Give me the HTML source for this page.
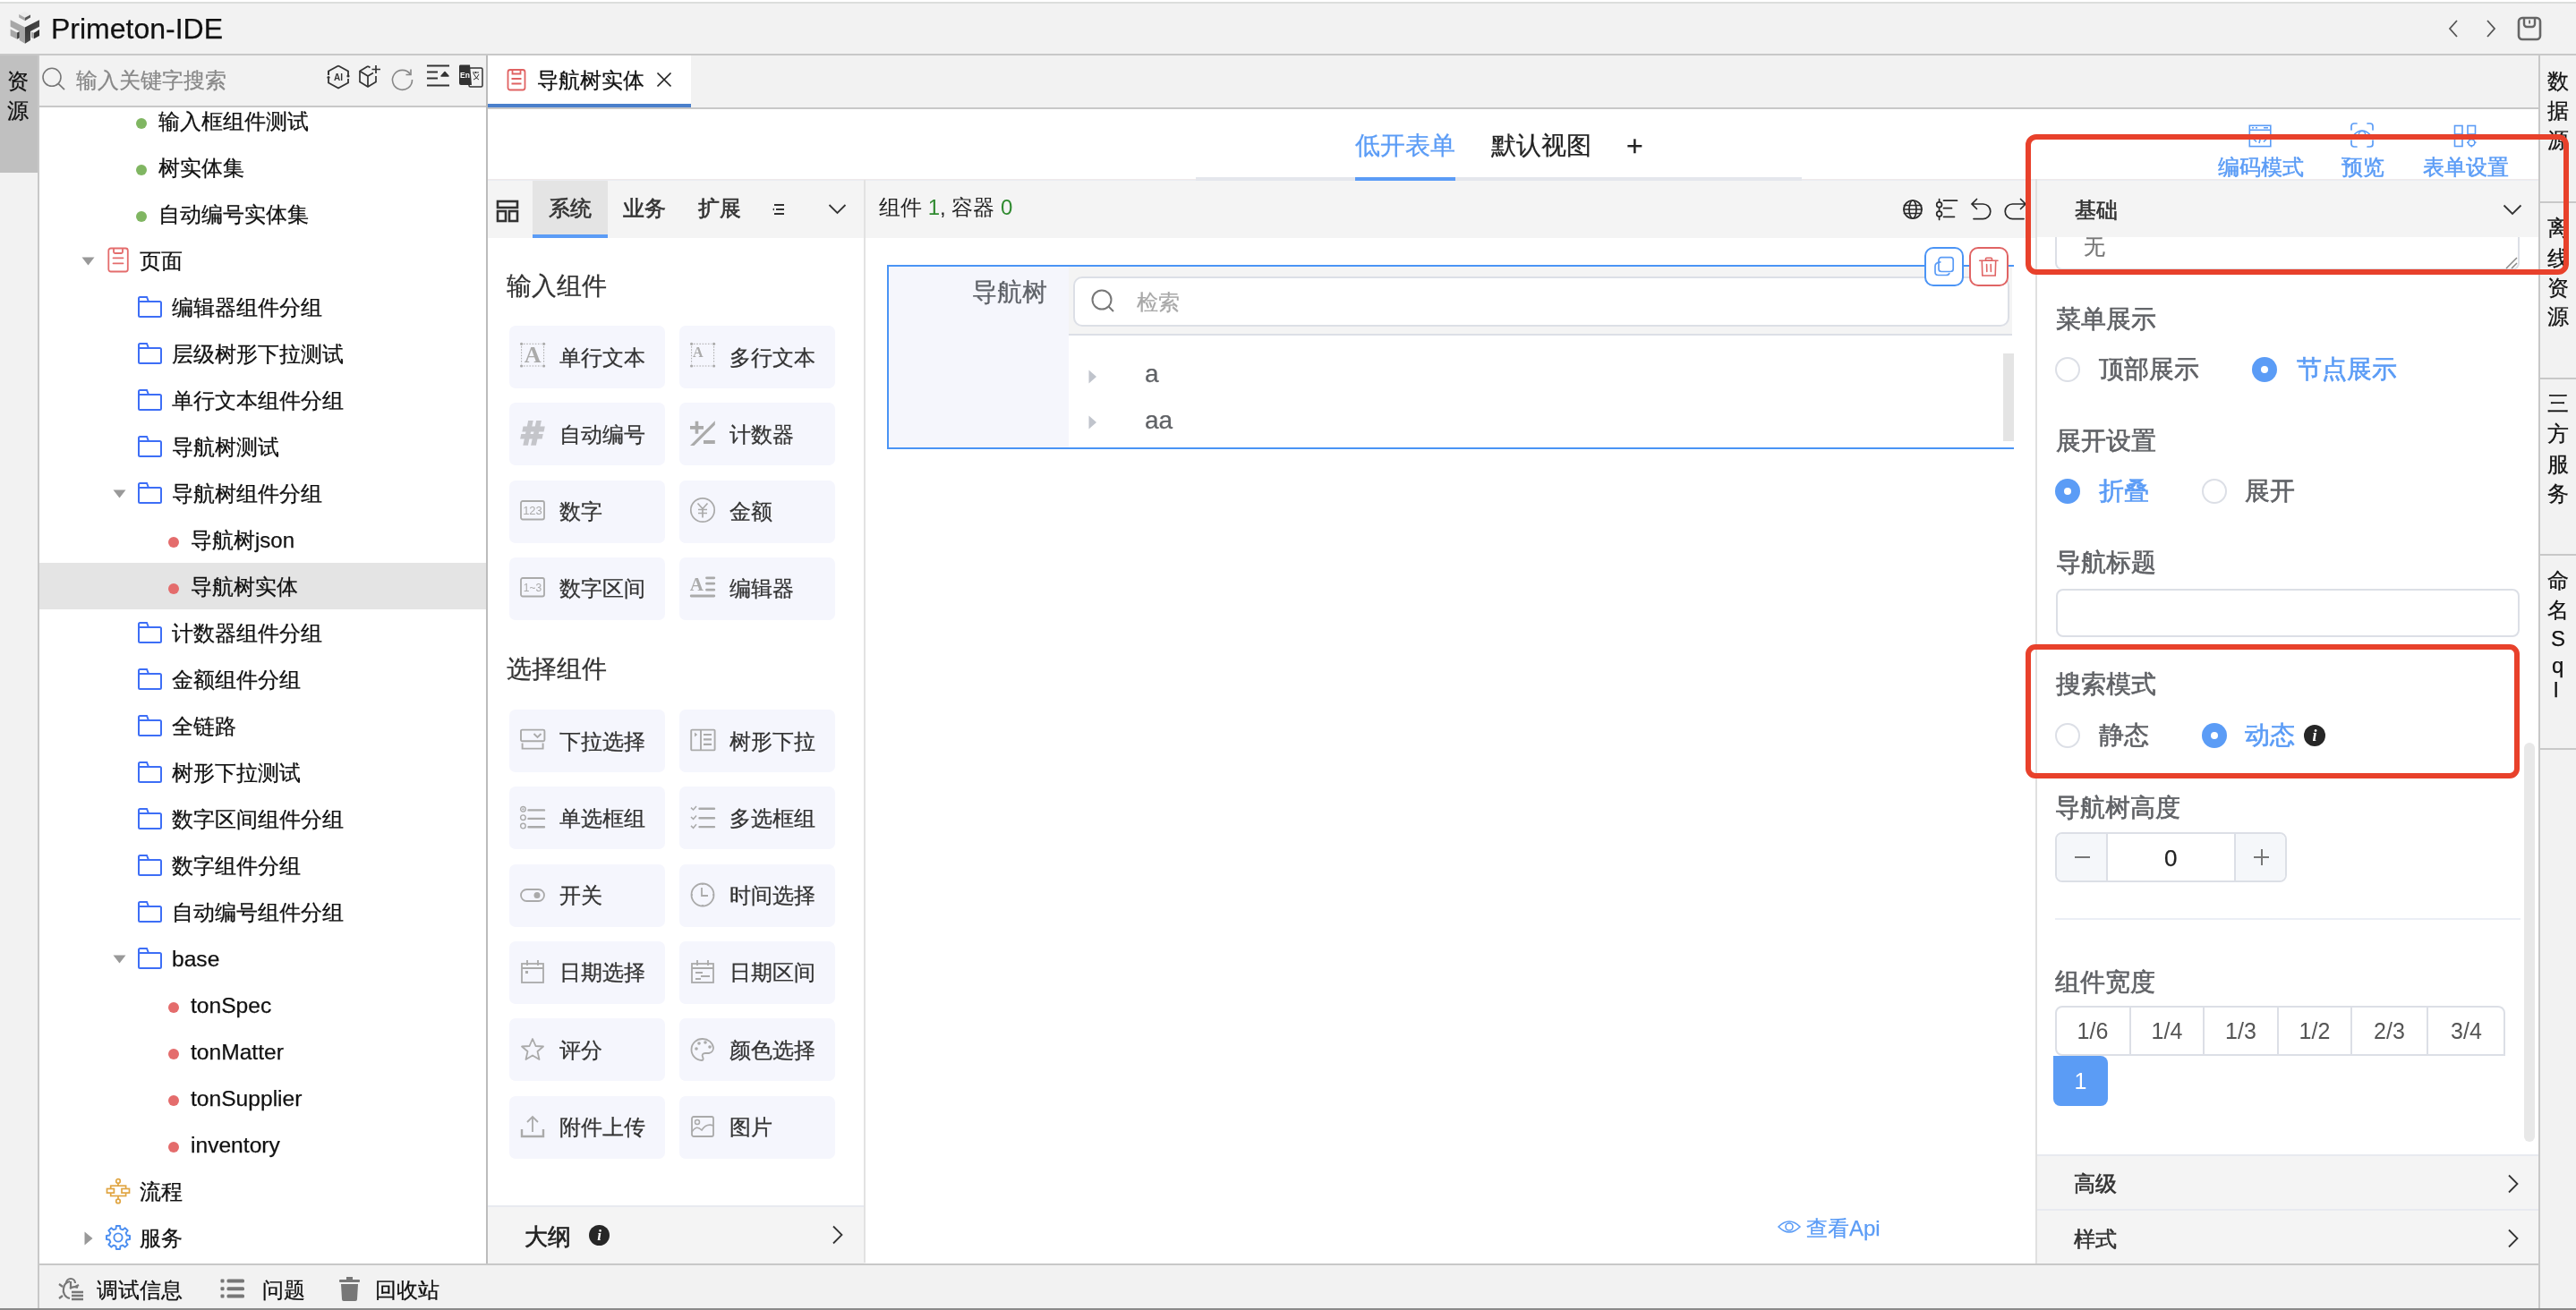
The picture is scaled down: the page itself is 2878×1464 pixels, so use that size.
<!DOCTYPE html>
<html><head><meta charset="utf-8"><style>
html,body{margin:0;padding:0;}
body{width:2878px;height:1464px;position:relative;overflow:hidden;background:#f2f2f2;font-family:'Liberation Sans',sans-serif;}
div{box-sizing:border-box;}
</style></head><body><div id="root" style="position:absolute;left:0;top:0;width:2878px;height:1464px;will-change:transform">
<div style="position:absolute;left:0px;top:0px;width:2878px;height:2px;background:#fff"></div><div style="position:absolute;left:0px;top:2px;width:2878px;height:2px;background:#dcdedc"></div><svg style="position:absolute;left:0px;top:0px;overflow:visible;" width="120" height="60" viewBox="0 0 2576 1288">
<defs><linearGradient id="gr" x1="0" y1="0" x2="1" y2="1"><stop offset="0" stop-color="#2e2e2e"/><stop offset="1" stop-color="#5a5a5a"/></linearGradient></defs>
<polygon points="455,345 590,275 730,355 600,425" fill="#ececec"/>
<polygon points="455,345 600,425 600,500 455,420" fill="#a9a9a9"/>
<polygon points="600,425 730,355 730,420 600,500" fill="#555"/>
<polygon points="250,480 600,655 600,1045 465,965 465,750 250,640" fill="#a7a7a7"/>
<polygon points="250,700 410,785 410,940 250,860" fill="#a7a7a7"/>
<polygon points="410,785 465,755 465,905 410,940" fill="#3a3a3a"/>
<polygon points="600,655 945,475 945,640 730,750 730,965 600,1045" fill="url(#gr)"/>
<polygon points="750,760 815,790 815,930 750,900" fill="#a7a7a7"/>
<polygon points="815,790 945,710 945,860 815,930" fill="#2f2f2f"/>
</svg><div style="position:absolute;left:57px;top:6.5px;height:51px;line-height:51px;font-size:32px;color:#111;font-weight:400;white-space:nowrap;-webkit-text-stroke:0.25px #111;">Primeton-IDE</div><div style="position:absolute;left:0px;top:60px;width:2878px;height:2px;background:#c8c8c8"></div><div style="position:absolute;left:0px;top:62px;width:42px;height:131px;background:#c0c0c0"></div><div style="position:absolute;left:42px;top:62px;width:2px;height:1400px;background:#c8c8c8"></div><div style="position:absolute;left:7.5px;top:72.0px;height:38px;line-height:38px;font-size:24px;color:#111;font-weight:400;white-space:nowrap;-webkit-text-stroke:0.25px #111;">资</div><div style="position:absolute;left:7.5px;top:105.0px;height:38px;line-height:38px;font-size:24px;color:#111;font-weight:400;white-space:nowrap;-webkit-text-stroke:0.25px #111;">源</div><div style="position:absolute;left:2836px;top:62px;width:2px;height:1400px;background:#c8c8c8"></div><div style="position:absolute;left:44px;top:1412px;width:2792px;height:2px;background:#c8c8c8"></div><div style="position:absolute;left:0px;top:1462px;width:2878px;height:2px;background:#8a8a8a"></div><div style="position:absolute;left:44px;top:62px;width:499px;height:56px;background:#f2f2f2"></div><div style="position:absolute;left:44px;top:118px;width:499px;height:2px;background:#c8c8c8"></div><div style="position:absolute;left:44px;top:120px;width:499px;height:1292px;background:#fff"></div><div style="position:absolute;left:543px;top:62px;width:2px;height:1350px;background:#bcbcbc"></div><div style="position:absolute;left:85px;top:71.0px;height:38px;line-height:38px;font-size:24px;color:#888;font-weight:400;white-space:nowrap;-webkit-text-stroke:0.25px #888;">输入关键字搜索</div><div style="position:absolute;left:545px;top:62px;width:2291px;height:58px;background:#f2f2f2"></div><div style="position:absolute;left:545px;top:62px;width:227px;height:54px;background:#fff"></div><div style="position:absolute;left:545px;top:116px;width:227px;height:4px;background:#4a7fcb"></div><div style="position:absolute;left:545px;top:120px;width:2291px;height:2px;background:#c8c8c8"></div><div style="position:absolute;left:600px;top:71.0px;height:38px;line-height:38px;font-size:24px;color:#111;font-weight:400;white-space:nowrap;-webkit-text-stroke:0.25px #111;">导航树实体</div><div style="position:absolute;left:545px;top:122px;width:2291px;height:79px;background:#fff"></div><svg style="position:absolute;left:2734px;top:22px;overflow:visible;" width="14" height="20" viewBox="0 0 14 20"><path d="M11 1 L3 10 L11 19" fill="none" stroke="#555" stroke-width="1.8"/></svg><svg style="position:absolute;left:2776px;top:22px;overflow:visible;" width="14" height="20" viewBox="0 0 14 20"><path d="M3 1 L11 10 L3 19" fill="none" stroke="#555" stroke-width="1.8"/></svg><svg style="position:absolute;left:2812px;top:18px;overflow:visible;" width="28" height="28" viewBox="0 0 28 28"><rect x="2" y="2" width="24" height="24" rx="4" fill="none" stroke="#666" stroke-width="2.6"/><path d="M8 2 V9 a3 3 0 0 0 3 3 H17 a3 3 0 0 0 3 -3 V2" fill="none" stroke="#666" stroke-width="2.4"/><rect x="13.2" y="4.5" width="1.8" height="4" fill="#666"/></svg><div style="position:absolute;left:2846px;top:72.0px;height:38px;line-height:38px;font-size:24px;color:#111;font-weight:400;white-space:nowrap;-webkit-text-stroke:0.25px #111;">数</div><div style="position:absolute;left:2846px;top:105.0px;height:38px;line-height:38px;font-size:24px;color:#111;font-weight:400;white-space:nowrap;-webkit-text-stroke:0.25px #111;">据</div><div style="position:absolute;left:2846px;top:138.0px;height:38px;line-height:38px;font-size:24px;color:#111;font-weight:400;white-space:nowrap;-webkit-text-stroke:0.25px #111;">源</div><div style="position:absolute;left:2846px;top:236.0px;height:38px;line-height:38px;font-size:24px;color:#111;font-weight:400;white-space:nowrap;-webkit-text-stroke:0.25px #111;">离</div><div style="position:absolute;left:2846px;top:269.5px;height:38px;line-height:38px;font-size:24px;color:#111;font-weight:400;white-space:nowrap;-webkit-text-stroke:0.25px #111;">线</div><div style="position:absolute;left:2846px;top:303.0px;height:38px;line-height:38px;font-size:24px;color:#111;font-weight:400;white-space:nowrap;-webkit-text-stroke:0.25px #111;">资</div><div style="position:absolute;left:2846px;top:335.0px;height:38px;line-height:38px;font-size:24px;color:#111;font-weight:400;white-space:nowrap;-webkit-text-stroke:0.25px #111;">源</div><div style="position:absolute;left:2846px;top:432.0px;height:38px;line-height:38px;font-size:24px;color:#111;font-weight:400;white-space:nowrap;-webkit-text-stroke:0.25px #111;">三</div><div style="position:absolute;left:2846px;top:465.5px;height:38px;line-height:38px;font-size:24px;color:#111;font-weight:400;white-space:nowrap;-webkit-text-stroke:0.25px #111;">方</div><div style="position:absolute;left:2846px;top:500.0px;height:38px;line-height:38px;font-size:24px;color:#111;font-weight:400;white-space:nowrap;-webkit-text-stroke:0.25px #111;">服</div><div style="position:absolute;left:2846px;top:532.5px;height:38px;line-height:38px;font-size:24px;color:#111;font-weight:400;white-space:nowrap;-webkit-text-stroke:0.25px #111;">务</div><div style="position:absolute;left:2846px;top:630.0px;height:38px;line-height:38px;font-size:24px;color:#111;font-weight:400;white-space:nowrap;-webkit-text-stroke:0.25px #111;">命</div><div style="position:absolute;left:2846px;top:663.0px;height:38px;line-height:38px;font-size:24px;color:#111;font-weight:400;white-space:nowrap;-webkit-text-stroke:0.25px #111;">名</div><div style="position:absolute;left:2838px;top:225px;width:40px;height:2px;background:#c8c8c8"></div><div style="position:absolute;left:2838px;top:422px;width:40px;height:2px;background:#c8c8c8"></div><div style="position:absolute;left:2838px;top:619px;width:40px;height:2px;background:#c8c8c8"></div><div style="position:absolute;left:2838px;top:836px;width:40px;height:2px;background:#c8c8c8"></div><div style="position:absolute;left:2850px;top:695.0px;height:38px;line-height:38px;font-size:24px;color:#111;font-weight:400;white-space:nowrap;-webkit-text-stroke:0.25px #111;">S</div><div style="position:absolute;left:2851px;top:725.0px;height:38px;line-height:38px;font-size:24px;color:#111;font-weight:400;white-space:nowrap;-webkit-text-stroke:0.25px #111;">q</div><div style="position:absolute;left:2853px;top:752.0px;height:38px;line-height:38px;font-size:24px;color:#111;font-weight:400;white-space:nowrap;-webkit-text-stroke:0.25px #111;">l</div><svg style="position:absolute;left:46px;top:74px;overflow:visible;" width="28" height="28" viewBox="0 0 28 28"><circle cx="12" cy="12.3" r="10" fill="none" stroke="#777" stroke-width="1.6"/><path d="M19.3 19.6 L26 26.2" stroke="#777" stroke-width="1.7"/></svg><svg style="position:absolute;left:364px;top:72px;overflow:visible;" width="28" height="28" viewBox="0 0 28 28"><path d="M14 1.5 L25 7.5 V12 M25 16 V20.5 L14 26.5 L3 20.5 V16 M3 12 V7.5 Z" fill="none" stroke="#333" stroke-width="1.8"/><path d="M14 1.5 L3 7.5 V11" fill="none" stroke="#333" stroke-width="1.8"/><circle cx="25" cy="13" r="1.6" fill="#333"/><circle cx="3" cy="14.5" r="1.6" fill="#333"/><text x="14" y="18" font-size="10" font-family="Liberation Sans" font-weight="bold" text-anchor="middle" fill="#333">AI</text></svg><svg style="position:absolute;left:400px;top:72px;overflow:visible;" width="28" height="28" viewBox="0 0 28 28"><path d="M11 2 L2 7.5 V19.5 L11 25 L20 19.5 V13" fill="none" stroke="#333" stroke-width="1.7"/><path d="M2 7.5 L11 13 L17 9.5 M11 13 V25" fill="none" stroke="#333" stroke-width="1.7"/><path d="M11 2 L13.5 3.5" stroke="#333" stroke-width="1.7"/><path d="M20 1 V10 M15.5 5.5 H25" stroke="#333" stroke-width="1.7"/></svg><svg style="position:absolute;left:437px;top:75px;overflow:visible;" width="26" height="27" viewBox="0 0 26 27"><path d="M21.5 8 A11 11 0 1 0 23.5 14" fill="none" stroke="#888" stroke-width="1.6"/><path d="M22 2.5 V8.5 H16.5" fill="none" stroke="#888" stroke-width="1.6"/></svg><svg style="position:absolute;left:476px;top:72px;overflow:visible;" width="28" height="27" viewBox="0 0 28 27"><path d="M1 1.5 H26 M1 8.5 H13 M1 15.5 H13 M1 23.5 H26" stroke="#333" stroke-width="1.8"/><path d="M17 13 L21 8.5 L25 13 Z" fill="#333" stroke="#333" stroke-width="1.5" stroke-linejoin="round"/></svg><svg style="position:absolute;left:512px;top:72px;overflow:visible;" width="28" height="28" viewBox="0 0 28 28"><rect x="12" y="4" width="15" height="21" rx="1.5" fill="none" stroke="#333" stroke-width="1.5"/><path d="M2 0.5 H13 L15 23 H3 A2 2 0 0 1 1 21 V2.5 A2 2 0 0 1 2 0.5 Z" fill="#333"/><text x="7.5" y="14.5" font-size="8.5" font-family="Liberation Sans" font-weight="bold" fill="#fff" text-anchor="middle">En</text><path d="M16 9 H23 M19.5 8 V10 M17 10 Q20 16 23 17 M23 11 Q21 16 17 17" fill="none" stroke="#333" stroke-width="1"/></svg><div style="position:absolute;left:152px;top:132px;width:12px;height:12px;border-radius:50%;background:#80b662"></div><div style="position:absolute;left:177px;top:116.5px;height:38px;line-height:38px;font-size:24px;color:#111;font-weight:400;white-space:nowrap;-webkit-text-stroke:0.25px #111;">输入框组件测试</div><div style="position:absolute;left:152px;top:184px;width:12px;height:12px;border-radius:50%;background:#80b662"></div><div style="position:absolute;left:177px;top:168.5px;height:38px;line-height:38px;font-size:24px;color:#111;font-weight:400;white-space:nowrap;-webkit-text-stroke:0.25px #111;">树实体集</div><div style="position:absolute;left:152px;top:236px;width:12px;height:12px;border-radius:50%;background:#80b662"></div><div style="position:absolute;left:177px;top:220.5px;height:38px;line-height:38px;font-size:24px;color:#111;font-weight:400;white-space:nowrap;-webkit-text-stroke:0.25px #111;">自动编号实体集</div><svg style="position:absolute;left:91px;top:287px;overflow:visible;" width="15" height="10" viewBox="0 0 15 10"><path d="M0.5 0.5 H14.5 L7.5 9.5 Z" fill="#999"/></svg><svg style="position:absolute;left:119px;top:275px;overflow:visible;" width="26" height="30" viewBox="0 0 26 30"><rect x="2.3" y="2.5" width="21.5" height="26" rx="2.5" fill="none" stroke="#e46c6c" stroke-width="1.8"/><path d="M8 2.5 V6.5 Q8 8 9.5 8 H16.5 Q18 8 18 6.5 V2.5" fill="none" stroke="#e46c6c" stroke-width="1.8"/><path d="M7.5 13.3 H18.5 M7.5 19.3 H18.5" stroke="#e46c6c" stroke-width="1.8" stroke-linecap="round"/></svg><div style="position:absolute;left:155.5px;top:272.5px;height:38px;line-height:38px;font-size:24px;color:#111;font-weight:400;white-space:nowrap;-webkit-text-stroke:0.25px #111;">页面</div><svg style="position:absolute;left:153px;top:330px;overflow:visible;" width="29" height="25" viewBox="0 0 29 25"><path d="M2 4 V22.5 A1.5 1.5 0 0 0 3.5 24 H25.5 A1.5 1.5 0 0 0 27 22.5 V8.5 A1.5 1.5 0 0 0 25.5 7 H13 L11 2 H3.5 A1.5 1.5 0 0 0 2 3.5 Z M2 7 H13" fill="none" stroke="#3d6ef6" stroke-width="2"/></svg><div style="position:absolute;left:192px;top:324.5px;height:38px;line-height:38px;font-size:24px;color:#111;font-weight:400;white-space:nowrap;-webkit-text-stroke:0.25px #111;">编辑器组件分组</div><svg style="position:absolute;left:153px;top:382px;overflow:visible;" width="29" height="25" viewBox="0 0 29 25"><path d="M2 4 V22.5 A1.5 1.5 0 0 0 3.5 24 H25.5 A1.5 1.5 0 0 0 27 22.5 V8.5 A1.5 1.5 0 0 0 25.5 7 H13 L11 2 H3.5 A1.5 1.5 0 0 0 2 3.5 Z M2 7 H13" fill="none" stroke="#3d6ef6" stroke-width="2"/></svg><div style="position:absolute;left:192px;top:376.5px;height:38px;line-height:38px;font-size:24px;color:#111;font-weight:400;white-space:nowrap;-webkit-text-stroke:0.25px #111;">层级树形下拉测试</div><svg style="position:absolute;left:153px;top:434px;overflow:visible;" width="29" height="25" viewBox="0 0 29 25"><path d="M2 4 V22.5 A1.5 1.5 0 0 0 3.5 24 H25.5 A1.5 1.5 0 0 0 27 22.5 V8.5 A1.5 1.5 0 0 0 25.5 7 H13 L11 2 H3.5 A1.5 1.5 0 0 0 2 3.5 Z M2 7 H13" fill="none" stroke="#3d6ef6" stroke-width="2"/></svg><div style="position:absolute;left:192px;top:428.5px;height:38px;line-height:38px;font-size:24px;color:#111;font-weight:400;white-space:nowrap;-webkit-text-stroke:0.25px #111;">单行文本组件分组</div><svg style="position:absolute;left:153px;top:486px;overflow:visible;" width="29" height="25" viewBox="0 0 29 25"><path d="M2 4 V22.5 A1.5 1.5 0 0 0 3.5 24 H25.5 A1.5 1.5 0 0 0 27 22.5 V8.5 A1.5 1.5 0 0 0 25.5 7 H13 L11 2 H3.5 A1.5 1.5 0 0 0 2 3.5 Z M2 7 H13" fill="none" stroke="#3d6ef6" stroke-width="2"/></svg><div style="position:absolute;left:192px;top:480.5px;height:38px;line-height:38px;font-size:24px;color:#111;font-weight:400;white-space:nowrap;-webkit-text-stroke:0.25px #111;">导航树测试</div><svg style="position:absolute;left:126px;top:547px;overflow:visible;" width="15" height="10" viewBox="0 0 15 10"><path d="M0.5 0.5 H14.5 L7.5 9.5 Z" fill="#999"/></svg><svg style="position:absolute;left:153px;top:538px;overflow:visible;" width="29" height="25" viewBox="0 0 29 25"><path d="M2 4 V22.5 A1.5 1.5 0 0 0 3.5 24 H25.5 A1.5 1.5 0 0 0 27 22.5 V8.5 A1.5 1.5 0 0 0 25.5 7 H13 L11 2 H3.5 A1.5 1.5 0 0 0 2 3.5 Z M2 7 H13" fill="none" stroke="#3d6ef6" stroke-width="2"/></svg><div style="position:absolute;left:192px;top:532.5px;height:38px;line-height:38px;font-size:24px;color:#111;font-weight:400;white-space:nowrap;-webkit-text-stroke:0.25px #111;">导航树组件分组</div><div style="position:absolute;left:188px;top:600px;width:12px;height:12px;border-radius:50%;background:#e46c6c"></div><div style="position:absolute;left:213px;top:584.5px;height:38px;line-height:38px;font-size:24px;color:#111;font-weight:400;white-space:nowrap;-webkit-text-stroke:0.25px #111;">导航树json</div><div style="position:absolute;left:44px;top:629px;width:499px;height:52px;background:#e4e4e4"></div><div style="position:absolute;left:188px;top:652px;width:12px;height:12px;border-radius:50%;background:#e46c6c"></div><div style="position:absolute;left:213px;top:636.5px;height:38px;line-height:38px;font-size:24px;color:#111;font-weight:400;white-space:nowrap;-webkit-text-stroke:0.25px #111;">导航树实体</div><svg style="position:absolute;left:153px;top:694px;overflow:visible;" width="29" height="25" viewBox="0 0 29 25"><path d="M2 4 V22.5 A1.5 1.5 0 0 0 3.5 24 H25.5 A1.5 1.5 0 0 0 27 22.5 V8.5 A1.5 1.5 0 0 0 25.5 7 H13 L11 2 H3.5 A1.5 1.5 0 0 0 2 3.5 Z M2 7 H13" fill="none" stroke="#3d6ef6" stroke-width="2"/></svg><div style="position:absolute;left:192px;top:688.5px;height:38px;line-height:38px;font-size:24px;color:#111;font-weight:400;white-space:nowrap;-webkit-text-stroke:0.25px #111;">计数器组件分组</div><svg style="position:absolute;left:153px;top:746px;overflow:visible;" width="29" height="25" viewBox="0 0 29 25"><path d="M2 4 V22.5 A1.5 1.5 0 0 0 3.5 24 H25.5 A1.5 1.5 0 0 0 27 22.5 V8.5 A1.5 1.5 0 0 0 25.5 7 H13 L11 2 H3.5 A1.5 1.5 0 0 0 2 3.5 Z M2 7 H13" fill="none" stroke="#3d6ef6" stroke-width="2"/></svg><div style="position:absolute;left:192px;top:740.5px;height:38px;line-height:38px;font-size:24px;color:#111;font-weight:400;white-space:nowrap;-webkit-text-stroke:0.25px #111;">金额组件分组</div><svg style="position:absolute;left:153px;top:798px;overflow:visible;" width="29" height="25" viewBox="0 0 29 25"><path d="M2 4 V22.5 A1.5 1.5 0 0 0 3.5 24 H25.5 A1.5 1.5 0 0 0 27 22.5 V8.5 A1.5 1.5 0 0 0 25.5 7 H13 L11 2 H3.5 A1.5 1.5 0 0 0 2 3.5 Z M2 7 H13" fill="none" stroke="#3d6ef6" stroke-width="2"/></svg><div style="position:absolute;left:192px;top:792.5px;height:38px;line-height:38px;font-size:24px;color:#111;font-weight:400;white-space:nowrap;-webkit-text-stroke:0.25px #111;">全链路</div><svg style="position:absolute;left:153px;top:850px;overflow:visible;" width="29" height="25" viewBox="0 0 29 25"><path d="M2 4 V22.5 A1.5 1.5 0 0 0 3.5 24 H25.5 A1.5 1.5 0 0 0 27 22.5 V8.5 A1.5 1.5 0 0 0 25.5 7 H13 L11 2 H3.5 A1.5 1.5 0 0 0 2 3.5 Z M2 7 H13" fill="none" stroke="#3d6ef6" stroke-width="2"/></svg><div style="position:absolute;left:192px;top:844.5px;height:38px;line-height:38px;font-size:24px;color:#111;font-weight:400;white-space:nowrap;-webkit-text-stroke:0.25px #111;">树形下拉测试</div><svg style="position:absolute;left:153px;top:902px;overflow:visible;" width="29" height="25" viewBox="0 0 29 25"><path d="M2 4 V22.5 A1.5 1.5 0 0 0 3.5 24 H25.5 A1.5 1.5 0 0 0 27 22.5 V8.5 A1.5 1.5 0 0 0 25.5 7 H13 L11 2 H3.5 A1.5 1.5 0 0 0 2 3.5 Z M2 7 H13" fill="none" stroke="#3d6ef6" stroke-width="2"/></svg><div style="position:absolute;left:192px;top:896.5px;height:38px;line-height:38px;font-size:24px;color:#111;font-weight:400;white-space:nowrap;-webkit-text-stroke:0.25px #111;">数字区间组件分组</div><svg style="position:absolute;left:153px;top:954px;overflow:visible;" width="29" height="25" viewBox="0 0 29 25"><path d="M2 4 V22.5 A1.5 1.5 0 0 0 3.5 24 H25.5 A1.5 1.5 0 0 0 27 22.5 V8.5 A1.5 1.5 0 0 0 25.5 7 H13 L11 2 H3.5 A1.5 1.5 0 0 0 2 3.5 Z M2 7 H13" fill="none" stroke="#3d6ef6" stroke-width="2"/></svg><div style="position:absolute;left:192px;top:948.5px;height:38px;line-height:38px;font-size:24px;color:#111;font-weight:400;white-space:nowrap;-webkit-text-stroke:0.25px #111;">数字组件分组</div><svg style="position:absolute;left:153px;top:1006px;overflow:visible;" width="29" height="25" viewBox="0 0 29 25"><path d="M2 4 V22.5 A1.5 1.5 0 0 0 3.5 24 H25.5 A1.5 1.5 0 0 0 27 22.5 V8.5 A1.5 1.5 0 0 0 25.5 7 H13 L11 2 H3.5 A1.5 1.5 0 0 0 2 3.5 Z M2 7 H13" fill="none" stroke="#3d6ef6" stroke-width="2"/></svg><div style="position:absolute;left:192px;top:1000.5px;height:38px;line-height:38px;font-size:24px;color:#111;font-weight:400;white-space:nowrap;-webkit-text-stroke:0.25px #111;">自动编号组件分组</div><svg style="position:absolute;left:126px;top:1067px;overflow:visible;" width="15" height="10" viewBox="0 0 15 10"><path d="M0.5 0.5 H14.5 L7.5 9.5 Z" fill="#999"/></svg><svg style="position:absolute;left:153px;top:1058px;overflow:visible;" width="29" height="25" viewBox="0 0 29 25"><path d="M2 4 V22.5 A1.5 1.5 0 0 0 3.5 24 H25.5 A1.5 1.5 0 0 0 27 22.5 V8.5 A1.5 1.5 0 0 0 25.5 7 H13 L11 2 H3.5 A1.5 1.5 0 0 0 2 3.5 Z M2 7 H13" fill="none" stroke="#3d6ef6" stroke-width="2"/></svg><div style="position:absolute;left:192px;top:1051.5px;height:39px;line-height:39px;font-size:24.6px;color:#111;font-weight:400;white-space:nowrap;-webkit-text-stroke:0.25px #111;">base</div><div style="position:absolute;left:188px;top:1120px;width:12px;height:12px;border-radius:50%;background:#e46c6c"></div><div style="position:absolute;left:213px;top:1103.5px;height:39px;line-height:39px;font-size:24.6px;color:#111;font-weight:400;white-space:nowrap;-webkit-text-stroke:0.25px #111;">tonSpec</div><div style="position:absolute;left:188px;top:1172px;width:12px;height:12px;border-radius:50%;background:#e46c6c"></div><div style="position:absolute;left:213px;top:1155.5px;height:39px;line-height:39px;font-size:24.6px;color:#111;font-weight:400;white-space:nowrap;-webkit-text-stroke:0.25px #111;">tonMatter</div><div style="position:absolute;left:188px;top:1224px;width:12px;height:12px;border-radius:50%;background:#e46c6c"></div><div style="position:absolute;left:213px;top:1207.5px;height:39px;line-height:39px;font-size:24.6px;color:#111;font-weight:400;white-space:nowrap;-webkit-text-stroke:0.25px #111;">tonSupplier</div><div style="position:absolute;left:188px;top:1276px;width:12px;height:12px;border-radius:50%;background:#e46c6c"></div><div style="position:absolute;left:213px;top:1259.5px;height:39px;line-height:39px;font-size:24.6px;color:#111;font-weight:400;white-space:nowrap;-webkit-text-stroke:0.25px #111;">inventory</div><svg style="position:absolute;left:110px;top:1310px;overflow:visible;" width="40" height="40" viewBox="0 0 40 40"><g fill="none" stroke="#e0a542" stroke-width="1.7">
<circle cx="22" cy="10" r="2.3"/><path d="M22 12.3 V15.2"/><rect x="13.7" y="15.2" width="16.9" height="11.3"/>
<path d="M22 26.5 V30"/><circle cx="22" cy="32.4" r="2.3"/></g>
<rect x="9.5" y="18.5" width="7.9" height="4.6" fill="#fff" stroke="#e0a542" stroke-width="1.7"/>
<rect x="26" y="18.5" width="8.5" height="4.6" fill="#fff" stroke="#e0a542" stroke-width="1.7"/></svg><div style="position:absolute;left:155.5px;top:1312.5px;height:38px;line-height:38px;font-size:24px;color:#111;font-weight:400;white-space:nowrap;-webkit-text-stroke:0.25px #111;">流程</div><svg style="position:absolute;left:94px;top:1376px;overflow:visible;" width="10" height="16" viewBox="0 0 10 16"><path d="M0.5 0.5 V15.5 L9.5 8 Z" fill="#999"/></svg><svg style="position:absolute;left:117px;top:1368px;overflow:visible;" width="30" height="30" viewBox="0 0 30 30"><path d="M28.04 12.94 L28.04 17.06 L24.69 17.49 L23.61 20.09 L25.68 22.76 L22.76 25.68 L20.09 23.61 L17.49 24.69 L17.06 28.04 L12.94 28.04 L12.51 24.69 L9.91 23.61 L7.24 25.68 L4.32 22.76 L6.39 20.09 L5.31 17.49 L1.96 17.06 L1.96 12.94 L5.31 12.51 L6.39 9.91 L4.32 7.24 L7.24 4.32 L9.91 6.39 L12.51 5.31 L12.94 1.96 L17.06 1.96 L17.49 5.31 L20.09 6.39 L22.76 4.32 L25.68 7.24 L23.61 9.91 L24.69 12.51 Z" fill="none" stroke="#4a8df0" stroke-width="1.9" stroke-linejoin="round"/><circle cx="15" cy="15" r="4.6" fill="none" stroke="#4a8df0" stroke-width="1.9"/></svg><div style="position:absolute;left:155.5px;top:1364.5px;height:38px;line-height:38px;font-size:24px;color:#111;font-weight:400;white-space:nowrap;-webkit-text-stroke:0.25px #111;">服务</div><svg style="position:absolute;left:64px;top:1427px;overflow:visible;" width="30" height="28" viewBox="0 0 30 28"><g fill="none" stroke="#777" stroke-width="2.2"><path d="M10 7 A5 5 0 0 1 20 7"/><path d="M14 13 A9 9 0 0 1 23 12"/><path d="M14 24 A9 9 0 0 1 7 13 A9 9 0 0 1 14 5 "/><path d="M15 5 V12"/><path d="M2 8 L6 11 M2 24 L6 21"/><path d="M20 11 L24 9"/></g><path d="M16 17 H29 M16 21 H29 M16 25 H29" stroke="#777" stroke-width="2.4"/></svg><div style="position:absolute;left:108px;top:1423.0px;height:38px;line-height:38px;font-size:24px;color:#111;font-weight:400;white-space:nowrap;-webkit-text-stroke:0.25px #111;">调试信息</div><svg style="position:absolute;left:245px;top:1428px;overflow:visible;" width="30" height="24" viewBox="0 0 30 24"><g fill="#777"><rect x="1.5" y="1.6" width="4" height="4" rx="1"/><rect x="1.5" y="10.3" width="4" height="4" rx="1"/><rect x="1.5" y="18.5" width="4" height="4" rx="1"/><rect x="8.5" y="1.6" width="19.5" height="4" rx="1.5"/><rect x="8.5" y="10.3" width="19.5" height="4" rx="1.5"/><rect x="8.5" y="18.5" width="19.5" height="4" rx="1.5"/></g></svg><div style="position:absolute;left:293px;top:1423.0px;height:38px;line-height:38px;font-size:24px;color:#111;font-weight:400;white-space:nowrap;-webkit-text-stroke:0.25px #111;">问题</div><svg style="position:absolute;left:378px;top:1427px;overflow:visible;" width="26" height="28" viewBox="0 0 26 28"><g fill="#777"><rect x="1" y="3" width="23" height="3" rx="1"/><rect x="9" y="0" width="7" height="3"/><path d="M3 8 H22 L21 25 A2 2 0 0 1 19 27 H6 A2 2 0 0 1 4 25 Z"/></g></svg><div style="position:absolute;left:419px;top:1423.0px;height:38px;line-height:38px;font-size:24px;color:#111;font-weight:400;white-space:nowrap;-webkit-text-stroke:0.25px #111;">回收站</div><svg style="position:absolute;left:566px;top:76px;overflow:visible;" width="22" height="26" viewBox="0 0 22 26"><rect x="1.5" y="2" width="19" height="22.5" rx="2.5" fill="none" stroke="#e06262" stroke-width="1.8"/><path d="M6.5 2 V6.5 H15.5 V2" fill="none" stroke="#e06262" stroke-width="1.8"/><path d="M5.5 12 H16.5 M5.5 17.5 H16.5" stroke="#e06262" stroke-width="1.8"/></svg><svg style="position:absolute;left:733px;top:80px;overflow:visible;" width="18" height="18" viewBox="0 0 18 18"><path d="M1.5 1.5 L16.5 16.5 M16.5 1.5 L1.5 16.5" stroke="#222" stroke-width="1.7"/></svg><div style="position:absolute;left:1514px;top:198px;width:112px;height:4px;background:#5b9cf6"></div><div style="position:absolute;left:1514px;top:141.0px;height:44px;line-height:44px;font-size:28px;color:#5b9cf6;font-weight:400;white-space:nowrap;-webkit-text-stroke:0.25px #5b9cf6;">低开表单</div><div style="position:absolute;left:1666px;top:141.0px;height:44px;line-height:44px;font-size:28px;color:#222;font-weight:400;white-space:nowrap;-webkit-text-stroke:0.25px #222;">默认视图</div><div style="position:absolute;left:1817px;top:137.5px;height:51px;line-height:51px;font-size:32px;color:#222;font-weight:400;white-space:nowrap;-webkit-text-stroke:0.25px #222;">+</div><svg style="position:absolute;left:2510px;top:138px;overflow:visible;" width="30" height="28" viewBox="0 0 30 28"><g fill="none" stroke="#5b9cf6" stroke-width="1.6"><rect x="3.3" y="2.3" width="23.5" height="23.3"/><path d="M3.3 7.3 H26.8"/><path d="M11 15.5 L8.5 18 L11 20.5 M19 15.5 L21.5 18 L19 20.5 M16 14 L14 22"/></g><path d="M6 4.8 H8 M10 4.8 H12 M19 4.8 H24" stroke="#5b9cf6" stroke-width="1.4"/></svg><div style="position:absolute;left:2478px;top:168.0px;height:38px;line-height:38px;font-size:24px;color:#5b9cf6;font-weight:400;white-space:nowrap;-webkit-text-stroke:0.5px #5b9cf6;">编码模式</div><svg style="position:absolute;left:2624px;top:136px;overflow:visible;" width="30" height="30" viewBox="0 0 30 30"><g fill="none" stroke="#5b9cf6" stroke-width="1.7" stroke-linecap="round"><path d="M3 9 V5 A3 3 0 0 1 6 2 H9 M21 2 H24 A3 3 0 0 1 27 5 V9 M27 21 V25 A3 3 0 0 1 24 28 H21 M9 28 H6 A3 3 0 0 1 3 25 V21"/><path d="M5.5 15 Q15 5 24.5 15 Q15 23.5 5.5 15 Z" stroke-width="1.5"/><circle cx="15" cy="14.2" r="3.6" stroke-width="1.5"/></g></svg><div style="position:absolute;left:2616px;top:168.0px;height:38px;line-height:38px;font-size:24px;color:#5b9cf6;font-weight:400;white-space:nowrap;-webkit-text-stroke:0.5px #5b9cf6;">预览</div><svg style="position:absolute;left:2740px;top:138px;overflow:visible;" width="28" height="28" viewBox="0 0 28 28"><g fill="none" stroke="#5b9cf6" stroke-width="1.6"><rect x="2.5" y="2.5" width="8.5" height="9.5"/><rect x="17" y="2.5" width="8.5" height="9.5"/><rect x="2.5" y="17" width="8.5" height="8.5"/><circle cx="21.3" cy="21.3" r="3.6"/></g><path d="M21.3 16 V17.5 M21.3 25 V26.5 M16 21.3 H17.5 M25 21.3 H26.5" stroke="#5b9cf6" stroke-width="1.6"/></svg><div style="position:absolute;left:2707px;top:168.0px;height:38px;line-height:38px;font-size:24px;color:#5b9cf6;font-weight:400;white-space:nowrap;-webkit-text-stroke:0.5px #5b9cf6;">表单设置</div><div style="position:absolute;left:545px;top:201px;width:421px;height:65px;background:#f4f4f4;border-top:1px solid #eaecf1"></div><div style="position:absolute;left:545px;top:200px;width:2291px;height:1px;background:#efe9ea"></div><div style="position:absolute;left:595px;top:202px;width:84px;height:60px;background:#e4e4e4"></div><div style="position:absolute;left:595px;top:262px;width:84px;height:4px;background:#5b9cf6"></div><svg style="position:absolute;left:554px;top:223px;overflow:visible;" width="26" height="26" viewBox="0 0 26 26"><g fill="none" stroke="#333" stroke-width="2.6"><rect x="2" y="2" width="22" height="7"/><rect x="2" y="13" width="9" height="11"/><rect x="15" y="13" width="9" height="11"/></g></svg><div style="position:absolute;left:613px;top:214.0px;height:38px;line-height:38px;font-size:24px;color:#333;font-weight:400;white-space:nowrap;-webkit-text-stroke:0.6px #333;">系统</div><div style="position:absolute;left:696px;top:214.0px;height:38px;line-height:38px;font-size:24px;color:#333;font-weight:400;white-space:nowrap;-webkit-text-stroke:0.6px #333;">业务</div><div style="position:absolute;left:780px;top:214.0px;height:38px;line-height:38px;font-size:24px;color:#333;font-weight:400;white-space:nowrap;-webkit-text-stroke:0.6px #333;">扩展</div><svg style="position:absolute;left:862px;top:227px;overflow:visible;" width="16" height="14" viewBox="0 0 16 14"><path d="M3 2 H14 M5 7 H14 M3 12 H14" stroke="#333" stroke-width="1.8"/><path d="M1 7 L3 5.5 V8.5 Z" fill="#333"/></svg><svg style="position:absolute;left:925px;top:227px;overflow:visible;" width="21" height="14" viewBox="0 0 21 14"><path d="M1.5 2 L10.5 11 L19.5 2" fill="none" stroke="#333" stroke-width="1.8"/></svg><div style="position:absolute;left:965px;top:201px;width:2px;height:1210px;background:#e2e2e2"></div><div style="position:absolute;left:545px;top:266px;width:420px;height:1082px;background:#fff"></div><div style="position:absolute;left:566px;top:298.0px;height:44px;line-height:44px;font-size:28px;color:#333;font-weight:400;white-space:nowrap;-webkit-text-stroke:0.25px #333;">输入组件</div><div style="position:absolute;left:566px;top:726.0px;height:44px;line-height:44px;font-size:28px;color:#333;font-weight:400;white-space:nowrap;-webkit-text-stroke:0.25px #333;">选择组件</div><div style="position:absolute;left:569px;top:364.0px;width:174px;height:70px;background:#f5f6fd;border-radius:7px"></div><svg style="position:absolute;left:581px;top:384px;overflow:visible;" width="28" height="28" viewBox="0 0 28 28"><g fill="#aaa"><circle cx="1.6" cy="0.3" r="1.6"/><circle cx="26.6" cy="0.3" r="1.6"/><circle cx="1.6" cy="25" r="1.6"/><circle cx="26.6" cy="25" r="1.6"/></g><path d="M1.6 3 V22.5 M26.6 3 V22.5 M4 0.3 H24 M4 25 H24" stroke="#aaa" stroke-width="1" stroke-dasharray="1.6 1.6"/><text x="14.1" y="21.3" font-size="26" font-weight="bold" font-family="Liberation Serif" text-anchor="middle" fill="#aaa">A</text></svg><div style="position:absolute;left:625px;top:380.5px;height:38px;line-height:38px;font-size:24px;color:#333;font-weight:400;white-space:nowrap;-webkit-text-stroke:0.25px #333;">单行文本</div><div style="position:absolute;left:759px;top:364.0px;width:174px;height:70px;background:#f5f6fd;border-radius:7px"></div><svg style="position:absolute;left:771px;top:384px;overflow:visible;" width="28" height="28" viewBox="0 0 28 28"><g fill="#aaa"><circle cx="1.6" cy="0.3" r="1.6"/><circle cx="26.6" cy="0.3" r="1.6"/><circle cx="1.6" cy="25" r="1.6"/><circle cx="26.6" cy="25" r="1.6"/></g><path d="M1.6 3 V22.5 M26.6 3 V22.5 M4 0.3 H24 M4 25 H24" stroke="#aaa" stroke-width="1" stroke-dasharray="1.6 1.6"/><text x="8.8" y="14.8" font-size="16" font-weight="bold" font-family="Liberation Serif" text-anchor="middle" fill="#aaa">A</text></svg><div style="position:absolute;left:815px;top:380.5px;height:38px;line-height:38px;font-size:24px;color:#333;font-weight:400;white-space:nowrap;-webkit-text-stroke:0.25px #333;">多行文本</div><div style="position:absolute;left:569px;top:450.3px;width:174px;height:70px;background:#f5f6fd;border-radius:7px"></div><svg style="position:absolute;left:581px;top:471px;overflow:visible;" width="28" height="28" viewBox="0 0 28 28"><g fill="#c4c5ca"><polygon points="9.2,-0.9 14.7,-0.9 8.9,26.8 3.3,26.8"/><polygon points="18.2,-0.9 23.9,-0.9 17.9,26.8 12.1,26.8"/><polygon points="3.5,5.5 27.8,5.5 26.6,11.4 2.3,11.4"/><polygon points="1.3,14 25.8,14 24.6,19.5 0.1,19.5"/></g></svg><div style="position:absolute;left:625px;top:466.8px;height:38px;line-height:38px;font-size:24px;color:#333;font-weight:400;white-space:nowrap;-webkit-text-stroke:0.25px #333;">自动编号</div><div style="position:absolute;left:759px;top:450.3px;width:174px;height:70px;background:#f5f6fd;border-radius:7px"></div><svg style="position:absolute;left:771px;top:471px;overflow:visible;" width="28" height="28" viewBox="0 0 28 28"><path d="M0 6.9 H15 M7.5 -0.2 V13.7" stroke="#aaa" stroke-width="3.6"/><polygon points="0,27 4.5,27 27.8,3.8 27.8,-0.7" fill="#aaa"/><rect x="15" y="21" width="12.8" height="4" fill="#aaa"/></svg><div style="position:absolute;left:815px;top:466.8px;height:38px;line-height:38px;font-size:24px;color:#333;font-weight:400;white-space:nowrap;-webkit-text-stroke:0.25px #333;">计数器</div><div style="position:absolute;left:569px;top:536.6px;width:174px;height:70px;background:#f5f6fd;border-radius:7px"></div><svg style="position:absolute;left:581px;top:557px;overflow:visible;" width="28" height="28" viewBox="0 0 28 28"><rect x="1" y="3" width="26" height="20.5" rx="2" fill="none" stroke="#aaa" stroke-width="1.8"/><text x="14" y="18" font-size="13" font-family="Liberation Sans" text-anchor="middle" fill="#aaa">123</text></svg><div style="position:absolute;left:625px;top:553.1px;height:38px;line-height:38px;font-size:24px;color:#333;font-weight:400;white-space:nowrap;-webkit-text-stroke:0.25px #333;">数字</div><div style="position:absolute;left:759px;top:536.6px;width:174px;height:70px;background:#f5f6fd;border-radius:7px"></div><svg style="position:absolute;left:771px;top:557px;overflow:visible;" width="28" height="28" viewBox="0 0 28 28"><circle cx="14" cy="13" r="13.2" fill="none" stroke="#aaa" stroke-width="1.7"/><path d="M8.5 5.5 L14 11.5 L19.5 5.5 M14 11.5 V21.5 M9 12.5 H19 M9 16.5 H19" fill="none" stroke="#aaa" stroke-width="1.7"/></svg><div style="position:absolute;left:815px;top:553.1px;height:38px;line-height:38px;font-size:24px;color:#333;font-weight:400;white-space:nowrap;-webkit-text-stroke:0.25px #333;">金额</div><div style="position:absolute;left:569px;top:622.9px;width:174px;height:70px;background:#f5f6fd;border-radius:7px"></div><svg style="position:absolute;left:581px;top:643px;overflow:visible;" width="28" height="28" viewBox="0 0 28 28"><rect x="1" y="3" width="26" height="20.5" rx="2" fill="none" stroke="#aaa" stroke-width="1.8"/><text x="14" y="18" font-size="12" font-family="Liberation Sans" text-anchor="middle" fill="#aaa">1~3</text></svg><div style="position:absolute;left:625px;top:639.4px;height:38px;line-height:38px;font-size:24px;color:#333;font-weight:400;white-space:nowrap;-webkit-text-stroke:0.25px #333;">数字区间</div><div style="position:absolute;left:759px;top:622.9px;width:174px;height:70px;background:#f5f6fd;border-radius:7px"></div><svg style="position:absolute;left:771px;top:643px;overflow:visible;" width="28" height="28" viewBox="0 0 28 28"><text x="7.2" y="16.7" font-size="21" font-weight="bold" font-family="Liberation Serif" text-anchor="middle" fill="#aaa">A</text><path d="M18.5 2.8 H26.8 M18.5 9.2 H26.8 M18.5 16.2 H26.8 M1.2 23 H26.8" stroke="#aaa" stroke-width="2.8" stroke-linecap="round"/></svg><div style="position:absolute;left:815px;top:639.4px;height:38px;line-height:38px;font-size:24px;color:#333;font-weight:400;white-space:nowrap;-webkit-text-stroke:0.25px #333;">编辑器</div><div style="position:absolute;left:569px;top:793.0px;width:174px;height:70px;background:#f5f6fd;border-radius:7px"></div><svg style="position:absolute;left:581px;top:814px;overflow:visible;" width="28" height="28" viewBox="0 0 28 28"><g fill="none" stroke="#aaa" stroke-width="1.9"><rect x="1" y="1.6" width="26.4" height="12.6" rx="1.5"/><path d="M15.5 6 L19.5 10 L23.5 6"/><path d="M2.6 16.6 V22.6 H25.6 V16.6"/></g></svg><div style="position:absolute;left:625px;top:809.5px;height:38px;line-height:38px;font-size:24px;color:#333;font-weight:400;white-space:nowrap;-webkit-text-stroke:0.25px #333;">下拉选择</div><div style="position:absolute;left:759px;top:793.0px;width:174px;height:70px;background:#f5f6fd;border-radius:7px"></div><svg style="position:absolute;left:771px;top:814px;overflow:visible;" width="28" height="28" viewBox="0 0 28 28"><g fill="none" stroke="#aaa" stroke-width="1.9"><rect x="1.2" y="1.6" width="26.4" height="22.8" rx="1"/><path d="M12 1.6 V24.4"/></g><path d="M5 4.5 L8.2 7 L5 9.5 Z" fill="#aaa"/><path d="M15 7 H24 M15 12.3 H24 M15 17.8 H24" stroke="#aaa" stroke-width="2.2"/></svg><div style="position:absolute;left:815px;top:809.5px;height:38px;line-height:38px;font-size:24px;color:#333;font-weight:400;white-space:nowrap;-webkit-text-stroke:0.25px #333;">树形下拉</div><div style="position:absolute;left:569px;top:879.3px;width:174px;height:70px;background:#f5f6fd;border-radius:7px"></div><svg style="position:absolute;left:581px;top:900px;overflow:visible;" width="28" height="28" viewBox="0 0 28 28"><g fill="none" stroke="#aaa" stroke-width="1.4"><circle cx="3.4" cy="4.3" r="2.8"/><circle cx="3.4" cy="13.7" r="2.8"/><circle cx="3.4" cy="23.1" r="2.8"/></g><path d="M2 4.3 H4.8 M3.4 2.9 V5.7" stroke="#aaa" stroke-width="0.8"/><path d="M9.5 5.4 H27 M9.5 14.9 H27 M9.5 24.3 H27" stroke="#aaa" stroke-width="2.4" stroke-linecap="round"/></svg><div style="position:absolute;left:625px;top:895.8px;height:38px;line-height:38px;font-size:24px;color:#333;font-weight:400;white-space:nowrap;-webkit-text-stroke:0.25px #333;">单选框组</div><div style="position:absolute;left:759px;top:879.3px;width:174px;height:70px;background:#f5f6fd;border-radius:7px"></div><svg style="position:absolute;left:771px;top:900px;overflow:visible;" width="28" height="28" viewBox="0 0 28 28"><path d="M1 2.6 L3.6 5 L7 1 M1 13 L3.6 15.4 L7 11.4 M1 22.9 L3.6 25.3 L7 21.3" fill="none" stroke="#aaa" stroke-width="1.5"/><path d="M10.5 3.8 H27 M10.5 14.2 H27 M10.5 24.1 H27" stroke="#aaa" stroke-width="2.4" stroke-linecap="round"/></svg><div style="position:absolute;left:815px;top:895.8px;height:38px;line-height:38px;font-size:24px;color:#333;font-weight:400;white-space:nowrap;-webkit-text-stroke:0.25px #333;">多选框组</div><div style="position:absolute;left:569px;top:965.6px;width:174px;height:70px;background:#f5f6fd;border-radius:7px"></div><svg style="position:absolute;left:581px;top:986px;overflow:visible;" width="28" height="28" viewBox="0 0 28 28"><rect x="1" y="8" width="26" height="13" rx="6.5" fill="none" stroke="#aaa" stroke-width="1.8"/><circle cx="19" cy="14.5" r="3.5" fill="#aaa"/></svg><div style="position:absolute;left:625px;top:982.1px;height:38px;line-height:38px;font-size:24px;color:#333;font-weight:400;white-space:nowrap;-webkit-text-stroke:0.25px #333;">开关</div><div style="position:absolute;left:759px;top:965.6px;width:174px;height:70px;background:#f5f6fd;border-radius:7px"></div><svg style="position:absolute;left:771px;top:986px;overflow:visible;" width="28" height="28" viewBox="0 0 28 28"><circle cx="14" cy="14" r="12.5" fill="none" stroke="#aaa" stroke-width="1.8"/><path d="M13 6 V15 H20" fill="none" stroke="#aaa" stroke-width="1.8"/><path d="M14 1 V3 M14 25 V27 M1 14 H3 M25 14 H27" stroke="#aaa" stroke-width="1.5"/></svg><div style="position:absolute;left:815px;top:982.1px;height:38px;line-height:38px;font-size:24px;color:#333;font-weight:400;white-space:nowrap;-webkit-text-stroke:0.25px #333;">时间选择</div><div style="position:absolute;left:569px;top:1051.9px;width:174px;height:70px;background:#f5f6fd;border-radius:7px"></div><svg style="position:absolute;left:581px;top:1072px;overflow:visible;" width="28" height="28" viewBox="0 0 28 28"><g fill="none" stroke="#aaa" stroke-width="1.8"><rect x="2" y="5" width="24" height="21"/><path d="M2 10 H26 M8 1 V7 M20 1 V7"/></g><rect x="6" y="13" width="3" height="3" fill="#aaa"/></svg><div style="position:absolute;left:625px;top:1068.4px;height:38px;line-height:38px;font-size:24px;color:#333;font-weight:400;white-space:nowrap;-webkit-text-stroke:0.25px #333;">日期选择</div><div style="position:absolute;left:759px;top:1051.9px;width:174px;height:70px;background:#f5f6fd;border-radius:7px"></div><svg style="position:absolute;left:771px;top:1072px;overflow:visible;" width="28" height="28" viewBox="0 0 28 28"><g fill="none" stroke="#aaa" stroke-width="1.8"><rect x="2" y="5" width="24" height="21"/><path d="M2 10 H26 M8 1 V7 M20 1 V7 M6 15 H14 M12 19 H22 M6 22 H12"/></g></svg><div style="position:absolute;left:815px;top:1068.4px;height:38px;line-height:38px;font-size:24px;color:#333;font-weight:400;white-space:nowrap;-webkit-text-stroke:0.25px #333;">日期区间</div><div style="position:absolute;left:569px;top:1138.2px;width:174px;height:70px;background:#f5f6fd;border-radius:7px"></div><svg style="position:absolute;left:581px;top:1159px;overflow:visible;" width="28" height="28" viewBox="0 0 28 28"><path d="M14 2 L17.5 10 L26 10.5 L19.5 16 L21.5 25 L14 20.5 L6.5 25 L8.5 16 L2 10.5 L10.5 10 Z" fill="none" stroke="#aaa" stroke-width="1.8" stroke-linejoin="round"/></svg><div style="position:absolute;left:625px;top:1154.7px;height:38px;line-height:38px;font-size:24px;color:#333;font-weight:400;white-space:nowrap;-webkit-text-stroke:0.25px #333;">评分</div><div style="position:absolute;left:759px;top:1138.2px;width:174px;height:70px;background:#f5f6fd;border-radius:7px"></div><svg style="position:absolute;left:771px;top:1159px;overflow:visible;" width="28" height="28" viewBox="0 0 28 28"><path d="M14 2 A12 12 0 0 0 13 26 C15 26 15 24 14 22 C13 20 14 18 17 18 H21 A6 6 0 0 0 26 12 A12 11 0 0 0 14 2 Z" fill="none" stroke="#aaa" stroke-width="1.8"/><g fill="#aaa"><circle cx="7" cy="13" r="1.8"/><circle cx="10" cy="7" r="1.8"/><circle cx="17" cy="6" r="1.8"/><circle cx="22" cy="11" r="1.8"/></g></svg><div style="position:absolute;left:815px;top:1154.7px;height:38px;line-height:38px;font-size:24px;color:#333;font-weight:400;white-space:nowrap;-webkit-text-stroke:0.25px #333;">颜色选择</div><div style="position:absolute;left:569px;top:1224.5px;width:174px;height:70px;background:#f5f6fd;border-radius:7px"></div><svg style="position:absolute;left:581px;top:1245px;overflow:visible;" width="28" height="28" viewBox="0 0 28 28"><path d="M2 17 V25 H26 V17" fill="none" stroke="#aaa" stroke-width="2.4"/><path d="M14 20 V3 M8 9 L14 3 L20 9" fill="none" stroke="#aaa" stroke-width="1.8"/></svg><div style="position:absolute;left:625px;top:1241.0px;height:38px;line-height:38px;font-size:24px;color:#333;font-weight:400;white-space:nowrap;-webkit-text-stroke:0.25px #333;">附件上传</div><div style="position:absolute;left:759px;top:1224.5px;width:174px;height:70px;background:#f5f6fd;border-radius:7px"></div><svg style="position:absolute;left:771px;top:1245px;overflow:visible;" width="28" height="28" viewBox="0 0 28 28"><rect x="2" y="3" width="24" height="22" rx="2" fill="none" stroke="#aaa" stroke-width="1.8"/><circle cx="8" cy="9" r="2.5" fill="none" stroke="#aaa" stroke-width="1.5"/><path d="M2 20 C6 14 9 14 13 18 C17 12 21 11 26 13" fill="none" stroke="#aaa" stroke-width="1.6"/></svg><div style="position:absolute;left:815px;top:1241.0px;height:38px;line-height:38px;font-size:24px;color:#333;font-weight:400;white-space:nowrap;-webkit-text-stroke:0.25px #333;">图片</div><div style="position:absolute;left:545px;top:1347px;width:420px;height:64px;background:#f4f4f4;border-top:2px solid #e8eaf0"></div><div style="position:absolute;left:586px;top:1361.5px;height:41px;line-height:41px;font-size:26px;color:#222;font-weight:400;white-space:nowrap;-webkit-text-stroke:0.6px #222;">大纲</div><div style="position:absolute;left:658px;top:1369px;width:23px;height:23px;border-radius:50%;background:#262626;color:#fff;font-family:'Liberation Serif';font-style:italic;font-weight:bold;font-size:17px;line-height:23px;text-align:center">i</div><svg style="position:absolute;left:929px;top:1369px;overflow:visible;" width="14" height="22" viewBox="0 0 14 22"><path d="M2 1.5 L11.5 11 L2 20.5" fill="none" stroke="#333" stroke-width="1.8"/></svg><div style="position:absolute;left:967px;top:201px;width:1307px;height:65px;background:#f4f4f4;border-top:1px solid #eaecf1"></div><div style="position:absolute;left:967px;top:266px;width:1307px;height:1146px;background:#fff"></div><div style="position:absolute;left:982px;top:212px;height:40px;line-height:40px;font-size:24px;color:#222;white-space:nowrap">组件 <span style="color:#2f8a2f">1</span>, 容器 <span style="color:#2f8a2f">0</span></div><svg style="position:absolute;left:2110px;top:205px;overflow:visible;" width="170" height="55" viewBox="2110 205 170 55"><g fill="none" stroke="#2a2a2a" stroke-width="1.7" stroke-linecap="round">
<circle cx="2137" cy="234" r="10"/><ellipse cx="2137" cy="234" rx="4" ry="10"/>
<path d="M2127.5 229.5 H2146.5 M2127 234 H2147 M2127.5 238.5 H2146.5"/>
<path d="M2166.6 222.5 V245.5 M2171.5 224.2 H2186.5 M2171.5 232.7 H2180.5 M2171.5 242.3 H2183.5"/>
<path d="M2208.5 222.5 L2203 228 L2208.5 233.5 M2203.5 228 H2215.5 A8.3 8.3 0 0 1 2215.5 244.6 H2205"/>
<path d="M2257.5 222.5 L2263 228 L2257.5 233.5 M2262.5 228 H2248.5 A8.3 8.3 0 0 0 2248.5 244.6 H2261"/>
</g>
<circle cx="2166.6" cy="228.8" r="2.9" fill="#f3f3f3" stroke="#2a2a2a" stroke-width="1.7"/>
<circle cx="2166.6" cy="239" r="2.9" fill="#f3f3f3" stroke="#2a2a2a" stroke-width="1.7"/>
</svg><div style="position:absolute;left:991px;top:296px;width:1259px;height:206px;border:2px solid #4a94f5;border-right:none"></div><div style="position:absolute;left:993px;top:298px;width:201px;height:202px;background:#f5f6fc"></div><div style="position:absolute;left:1086px;top:305.0px;height:44px;line-height:44px;font-size:28px;color:#5f6268;font-weight:400;white-space:nowrap;-webkit-text-stroke:0.25px #5f6268;">导航树</div><div style="position:absolute;left:1194px;top:298px;width:1054px;height:75px;background:#f4f4f4"></div><div style="position:absolute;left:1194px;top:373px;width:1054px;height:2px;background:#dcdfe6"></div><div style="position:absolute;left:1199px;top:309px;width:1046px;height:56px;background:#fff;border:2px solid #dcdfe6;border-radius:10px"></div><svg style="position:absolute;left:1219px;top:323px;overflow:visible;" width="28" height="28" viewBox="0 0 28 28"><circle cx="12" cy="12" r="10.5" fill="none" stroke="#777" stroke-width="2"/><path d="M19.5 19.5 L25 25" stroke="#777" stroke-width="2"/></svg><div style="position:absolute;left:1270px;top:319.0px;height:38px;line-height:38px;font-size:24px;color:#a8a8a8;font-weight:400;white-space:nowrap;-webkit-text-stroke:0.25px #a8a8a8;">检索</div><svg style="position:absolute;left:1216px;top:413px;overflow:visible;" width="10" height="16" viewBox="0 0 10 16"><path d="M0.5 0.5 V15.5 L9 8 Z" fill="#c0c4cc"/></svg><svg style="position:absolute;left:1216px;top:464px;overflow:visible;" width="10" height="16" viewBox="0 0 10 16"><path d="M0.5 0.5 V15.5 L9 8 Z" fill="#c0c4cc"/></svg><div style="position:absolute;left:1279px;top:396.0px;height:44px;line-height:44px;font-size:28px;color:#606266;font-weight:400;white-space:nowrap;-webkit-text-stroke:0.25px #606266;">a</div><div style="position:absolute;left:1279px;top:448.0px;height:44px;line-height:44px;font-size:28px;color:#606266;font-weight:400;white-space:nowrap;-webkit-text-stroke:0.25px #606266;">aa</div><div style="position:absolute;left:2238px;top:395px;width:12px;height:98px;background:#e4e4e4"></div><div style="position:absolute;left:2150px;top:276px;width:44px;height:44px;border:2px solid #4b94f5;border-radius:10px;background:#fff"></div><svg style="position:absolute;left:2157px;top:284px;overflow:visible;" width="29" height="29" viewBox="0 0 29 29"><g fill="none" stroke="#5b9cf6" stroke-width="1.7" stroke-linecap="round"><rect x="9" y="3.7" width="16.2" height="15.8" rx="3"/><path d="M10.8 8.8 Q5 9.3 5 13.5 V20 Q5 23.5 8.5 23.5 H17 Q20.2 23.5 20.8 21.5"/></g></svg><div style="position:absolute;left:2200px;top:276px;width:44px;height:44px;border:2px solid #e06464;border-radius:10px;background:#fff"></div><svg style="position:absolute;left:2207px;top:284px;overflow:visible;" width="29" height="29" viewBox="0 0 29 29"><g fill="none" stroke="#e06464" stroke-width="1.6" stroke-linecap="round"><path d="M4.7 7.2 H25"/><rect x="11.5" y="4.2" width="7" height="3" rx="1"/><path d="M7.3 7.5 L7.8 24 H22.2 L22.7 7.5"/><path d="M12.6 11.5 L12.8 19.5 M17.2 11.5 L17.4 19.5"/></g></svg><svg style="position:absolute;left:1986px;top:1362px;overflow:visible;" width="26" height="18" viewBox="0 0 26 18"><g fill="none" stroke="#5b9cf6" stroke-width="1.6"><path d="M1 9 Q13 -3 25 9 Q13 21 1 9 Z"/><circle cx="13" cy="9" r="4"/></g></svg><div style="position:absolute;left:2018px;top:1354.0px;height:38px;line-height:38px;font-size:24px;color:#5b9cf6;font-weight:400;white-space:nowrap;-webkit-text-stroke:0.25px #5b9cf6;">查看Api</div><div style="position:absolute;left:2274px;top:200px;width:2px;height:1212px;background:#e0e0e0"></div><div style="position:absolute;left:2276px;top:265px;width:560px;height:1026px;background:#fff"></div><div style="position:absolute;left:2296px;top:250px;width:519px;height:52px;border:2px solid #dcdfe6;border-top:none;border-radius:0 0 8px 8px;background:#fff"></div><div style="position:absolute;left:2328px;top:257.0px;height:38px;line-height:38px;font-size:24px;color:#777;font-weight:400;white-space:nowrap;-webkit-text-stroke:0.25px #777;">无</div><div style="position:absolute;left:2276px;top:201px;width:560px;height:64px;background:#f4f4f4;border-top:1px solid #eaecf1"></div><div style="position:absolute;left:2318px;top:216.0px;height:38px;line-height:38px;font-size:24px;color:#333;font-weight:400;white-space:nowrap;-webkit-text-stroke:0.6px #333;">基础</div><svg style="position:absolute;left:2796px;top:228px;overflow:visible;" width="22" height="14" viewBox="0 0 22 14"><path d="M1.5 1.5 L11 11 L20.5 1.5" fill="none" stroke="#333" stroke-width="1.8"/></svg><svg style="position:absolute;left:2796px;top:284px;overflow:visible;" width="18" height="18" viewBox="0 0 18 18"><path d="M16 4 L4 16 M16 10 L10 16" stroke="#888" stroke-width="1.5"/></svg><div style="position:absolute;left:2297px;top:335.0px;height:44px;line-height:44px;font-size:28px;color:#606266;font-weight:400;white-space:nowrap;-webkit-text-stroke:0.6px #606266;">菜单展示</div><div style="position:absolute;left:2296px;top:399px;width:28px;height:28px;border-radius:50%;border:2px solid #dcdfe6;background:#fff"></div><div style="position:absolute;left:2345px;top:391.0px;height:44px;line-height:44px;font-size:28px;color:#606266;font-weight:400;white-space:nowrap;-webkit-text-stroke:0.6px #606266;">顶部展示</div><div style="position:absolute;left:2516px;top:399px;width:28px;height:28px;border-radius:50%;background:#5b9cf6"></div><div style="position:absolute;left:2526px;top:409px;width:8px;height:8px;border-radius:50%;background:#fff"></div><div style="position:absolute;left:2566px;top:391.0px;height:44px;line-height:44px;font-size:28px;color:#5b9cf6;font-weight:400;white-space:nowrap;-webkit-text-stroke:0.6px #5b9cf6;">节点展示</div><div style="position:absolute;left:2297px;top:471.0px;height:44px;line-height:44px;font-size:28px;color:#606266;font-weight:400;white-space:nowrap;-webkit-text-stroke:0.6px #606266;">展开设置</div><div style="position:absolute;left:2296px;top:535px;width:28px;height:28px;border-radius:50%;background:#5b9cf6"></div><div style="position:absolute;left:2306px;top:545px;width:8px;height:8px;border-radius:50%;background:#fff"></div><div style="position:absolute;left:2345px;top:527.0px;height:44px;line-height:44px;font-size:28px;color:#5b9cf6;font-weight:400;white-space:nowrap;-webkit-text-stroke:0.6px #5b9cf6;">折叠</div><div style="position:absolute;left:2460px;top:535px;width:28px;height:28px;border-radius:50%;border:2px solid #dcdfe6;background:#fff"></div><div style="position:absolute;left:2508px;top:527.0px;height:44px;line-height:44px;font-size:28px;color:#606266;font-weight:400;white-space:nowrap;-webkit-text-stroke:0.6px #606266;">展开</div><div style="position:absolute;left:2297px;top:607.0px;height:44px;line-height:44px;font-size:28px;color:#606266;font-weight:400;white-space:nowrap;-webkit-text-stroke:0.6px #606266;">导航标题</div><div style="position:absolute;left:2297px;top:658px;width:518px;height:54px;border:2px solid #dcdfe6;border-radius:8px;background:#fff"></div><div style="position:absolute;left:2297px;top:743.0px;height:44px;line-height:44px;font-size:28px;color:#606266;font-weight:400;white-space:nowrap;-webkit-text-stroke:0.6px #606266;">搜索模式</div><div style="position:absolute;left:2296px;top:808px;width:28px;height:28px;border-radius:50%;border:2px solid #dcdfe6;background:#fff"></div><div style="position:absolute;left:2345px;top:800.0px;height:44px;line-height:44px;font-size:28px;color:#606266;font-weight:400;white-space:nowrap;-webkit-text-stroke:0.6px #606266;">静态</div><div style="position:absolute;left:2460px;top:808px;width:28px;height:28px;border-radius:50%;background:#5b9cf6"></div><div style="position:absolute;left:2470px;top:818px;width:8px;height:8px;border-radius:50%;background:#fff"></div><div style="position:absolute;left:2508px;top:800.0px;height:44px;line-height:44px;font-size:28px;color:#5b9cf6;font-weight:400;white-space:nowrap;-webkit-text-stroke:0.6px #5b9cf6;">动态</div><div style="position:absolute;left:2574px;top:810px;width:24px;height:24px;border-radius:50%;background:#262626;color:#fff;font-family:'Liberation Serif';font-style:italic;font-weight:bold;font-size:18px;line-height:24px;text-align:center">i</div><div style="position:absolute;left:2296px;top:881.0px;height:44px;line-height:44px;font-size:28px;color:#606266;font-weight:400;white-space:nowrap;-webkit-text-stroke:0.6px #606266;">导航树高度</div><div style="position:absolute;left:2296px;top:930px;width:259px;height:56px;border:2px solid #dcdfe6;border-radius:8px;background:#fff;overflow:hidden"><div style="position:absolute;left:0;top:0;width:57px;height:52px;background:#f5f7fa;border-right:2px solid #dcdfe6"></div><div style="position:absolute;right:0;top:0;width:57px;height:52px;background:#f5f7fa;border-left:2px solid #dcdfe6"></div></div><div style="position:absolute;left:2318px;top:957px;width:17px;height:2px;background:#777"></div><div style="position:absolute;left:2518px;top:957px;width:17px;height:2px;background:#777"></div><div style="position:absolute;left:2525.5px;top:949px;width:2px;height:18px;background:#777"></div><div style="position:absolute;left:2418px;top:938.5px;height:41px;line-height:41px;font-size:26px;color:#222;font-weight:400;white-space:nowrap;-webkit-text-stroke:0.25px #222;">0</div><div style="position:absolute;left:2296px;top:1026px;width:520px;height:2px;background:#ebeef5"></div><div style="position:absolute;left:2296px;top:1076.0px;height:44px;line-height:44px;font-size:28px;color:#606266;font-weight:400;white-space:nowrap;-webkit-text-stroke:0.6px #606266;">组件宽度</div><div style="position:absolute;left:2296px;top:1124px;width:503px;height:56px;border:2px solid #dcdfe6;border-radius:8px 8px 0 8px;background:#fff"></div><div style="position:absolute;left:2296px;top:1130px;width:84px;height:44px;line-height:44px;text-align:center;font-size:25px;color:#555">1/6</div><div style="position:absolute;left:2379px;top:1124px;width:2px;height:56px;background:#dcdfe6"></div><div style="position:absolute;left:2380px;top:1130px;width:82px;height:44px;line-height:44px;text-align:center;font-size:25px;color:#555">1/4</div><div style="position:absolute;left:2461px;top:1124px;width:2px;height:56px;background:#dcdfe6"></div><div style="position:absolute;left:2462px;top:1130px;width:83px;height:44px;line-height:44px;text-align:center;font-size:25px;color:#555">1/3</div><div style="position:absolute;left:2544px;top:1124px;width:2px;height:56px;background:#dcdfe6"></div><div style="position:absolute;left:2545px;top:1130px;width:82px;height:44px;line-height:44px;text-align:center;font-size:25px;color:#555">1/2</div><div style="position:absolute;left:2626px;top:1124px;width:2px;height:56px;background:#dcdfe6"></div><div style="position:absolute;left:2627px;top:1130px;width:85px;height:44px;line-height:44px;text-align:center;font-size:25px;color:#555">2/3</div><div style="position:absolute;left:2711px;top:1124px;width:2px;height:56px;background:#dcdfe6"></div><div style="position:absolute;left:2712px;top:1130px;width:87px;height:44px;line-height:44px;text-align:center;font-size:25px;color:#555">3/4</div><div style="position:absolute;left:2294px;top:1180px;width:61px;height:56px;background:#5b9cf5;border-radius:0 8px 8px 8px;color:#fff;font-size:25px;line-height:56px;text-align:center">1</div><div style="position:absolute;left:2820px;top:830px;width:12px;height:446px;background:#e8e8e8;border-radius:6px"></div><div style="position:absolute;left:2276px;top:1290px;width:560px;height:62px;background:#f4f4f4;border-top:2px solid #e8eaf0"></div><div style="position:absolute;left:2317px;top:1304.0px;height:38px;line-height:38px;font-size:24px;color:#333;font-weight:400;white-space:nowrap;-webkit-text-stroke:0.6px #333;">高级</div><svg style="position:absolute;left:2801px;top:1312px;overflow:visible;" width="14" height="22" viewBox="0 0 14 22"><path d="M2 1.5 L11.5 11 L2 20.5" fill="none" stroke="#333" stroke-width="1.8"/></svg><div style="position:absolute;left:2276px;top:1351px;width:560px;height:61px;background:#f4f4f4;border-top:2px solid #e8eaf0"></div><div style="position:absolute;left:2317px;top:1366.0px;height:38px;line-height:38px;font-size:24px;color:#333;font-weight:400;white-space:nowrap;-webkit-text-stroke:0.6px #333;">样式</div><svg style="position:absolute;left:2801px;top:1373px;overflow:visible;" width="14" height="22" viewBox="0 0 14 22"><path d="M2 1.5 L11.5 11 L2 20.5" fill="none" stroke="#333" stroke-width="1.8"/></svg><div style="position:absolute;left:2263px;top:150px;width:607px;height:157px;border:6px solid #e8412b;border-radius:12px"></div><div style="position:absolute;left:2263px;top:720px;width:552px;height:150px;border:6px solid #e8412b;border-radius:11px"></div><div style="position:absolute;left:1336px;top:198px;width:677px;height:4px;background:#e4e6ec"></div><div style="position:absolute;left:1514px;top:198px;width:112px;height:4px;background:#5b9cf6"></div>
</div></body></html>
